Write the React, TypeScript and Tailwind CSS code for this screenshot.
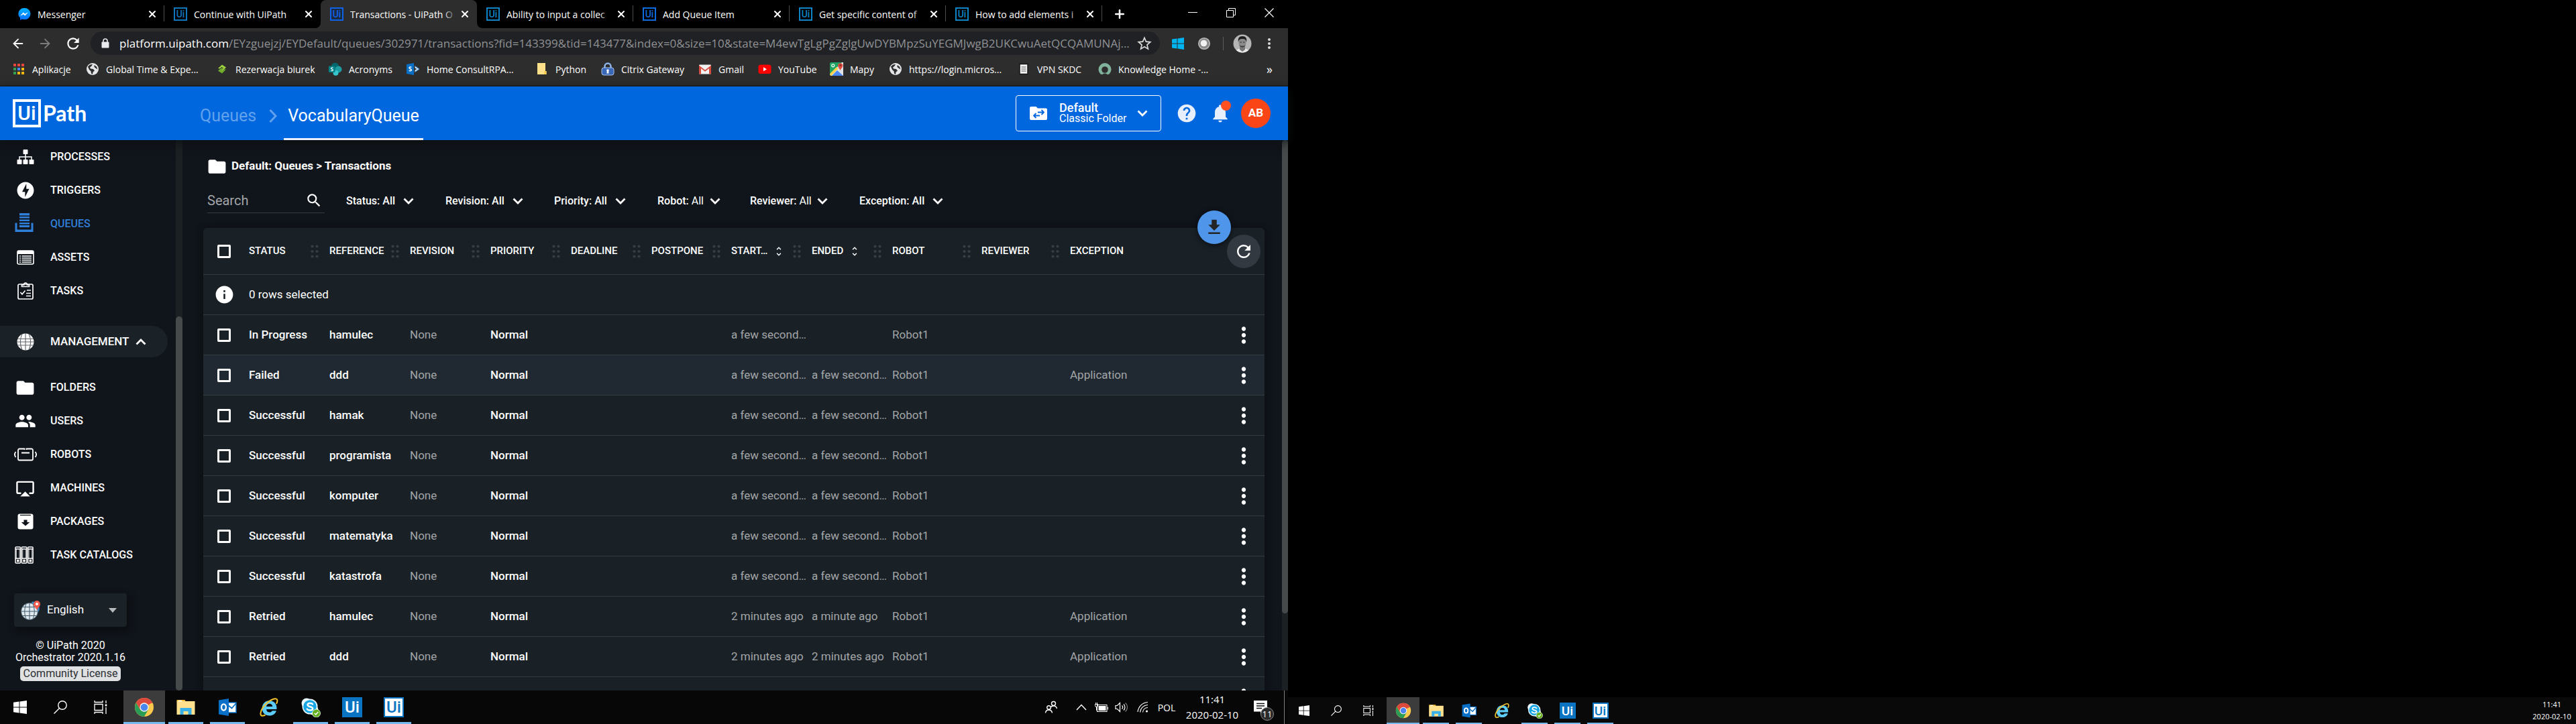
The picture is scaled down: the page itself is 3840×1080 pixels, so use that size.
import type { ReactNode } from "react";
import {
  MdAirplay,
  MdFileDownload,
  MdFolder,
  MdHelp,
  MdInfo,
  MdMoreVert,
  MdNotifications,
  MdOfflineBolt,
  MdPeople,
  MdRefresh,
  MdSearch,
  MdStarBorder,
  MdUnfoldMore,
} from "react-icons/md";
import { ArrowLeft, ArrowRight, Plus, X } from "lucide-react";

/* ---------- small shared marks ---------- */

function UiFavicon({ className }: { className: string }) {
  return (
    <span className={`flex size-5 shrink-0 items-center justify-center border-2 font-['Roboto',sans-serif] text-[14px] leading-none font-medium ${className}`}>
      Ui
    </span>
  );
}

function Chevron({ className }: { className: string }) {
  return (
    <svg viewBox="0 0 16 10" className={`h-2.5 w-4 shrink-0 ${className}`} fill="none" stroke="currentColor" strokeWidth="2.800">
      <path d="M1.500 1.500L8 8l6.500-6.500" />
    </svg>
  );
}

function MessengerIcon() {
  return (
    <svg viewBox="0 0 20 20" className="size-5 shrink-0">
      <defs>
        <linearGradient id="msg" x1="0" y1="0" x2="0" y2="1">
          <stop offset="0" stopColor="#00b2ff" />
          <stop offset="1" stopColor="#0a6cff" />
        </linearGradient>
      </defs>
      <path d="M10 1a8.6 8.6 0 0 0-8.700 8.600c0 2.500 1 4.500 2.700 6V19l2.700-1.500a10 10 0 0 0 3.300.6 8.600 8.600 0 1 0 0-17.100z" fill="url(#msg)" />
      <path d="M4.800 12l4-4.200 2.300 2.200L15.200 8l-4 4.200L9 10z" fill="#fff" stroke="#fff" strokeWidth=".6" strokeLinejoin="round" />
    </svg>
  );
}

function GlobeMark() {
  return (
    <svg viewBox="0 0 20 20" className="size-5">
      <circle cx="10" cy="10" r="9" fill="#e4e6e8" />
      <path d="M3 6.500C5 3.500 8 2.500 10 3L8.500 5.500 6 7.500l1 2 4 .5 2 2.500-2.500 2L10 18c-2-.5-2.500-3-2.300-4.500L5 11z" fill="#2d2d2d" />
      <path d="M12.500 4l3.500 2.500 1.500 4-2.500-1.500-2.500-2z" fill="#2d2d2d" />
    </svg>
  );
}

function AppsMark() {
  const colors = ["#e8453c", "#e8453c", "#e8453c", "#34a052", "#4286f5", "#f6b80c", "#34a052", "#f6b80c", "#f6b80c"];
  return (
    <svg viewBox="0 0 20 20" className="size-5">
      {colors.map((c, i) => (
        <rect key={i} x={2 + (i % 3) * 6} y={2 + Math.floor(i / 3) * 6} width="4" height="4" fill={c} />
      ))}
    </svg>
  );
}

const bookmarkIcons: Record<string, ReactNode> = {
  apps: <AppsMark />,
  globe: <GlobeMark />,
  green: (
    <svg viewBox="0 0 20 20" className="size-5">
      <path d="M4 9l6-5.500L16 7.500 10.500 13H8l4-4.500L9.500 7 6.500 9.500z" fill="#9bd13c" />
      <path d="M16 10.500L10 16.500l-6-4L9 8.500h3L8.500 12l2 1.300 3-2.800z" fill="#6fae2a" />
    </svg>
  ),
  sharepoint: (
    <svg viewBox="0 0 20 20" className="size-5">
      <circle cx="9.500" cy="6" r="5.500" fill="#03666c" />
      <circle cx="14.500" cy="10.500" r="5" fill="#1b9da2" />
      <circle cx="10.500" cy="15.800" r="4" fill="#36c5cf" />
      <rect x="0" y="5.500" width="9.500" height="9.500" rx="1" fill="#058388" />
      <path d="M6.500 8.300c-1.500-.7-3-.3-3 .7 0 1.400 3 1 3 2.500 0 1.200-1.800 1.400-3.200.7" stroke="#fff" strokeWidth="1.200" fill="none" />
    </svg>
  ),
  sharepointBlue: (
    <svg viewBox="0 0 20 20" className="size-5">
      <path d="M0 3l11-2v18L0 17z" fill="#0a6fc6" />
      <path d="M7.300 7.300C5.500 6.500 4 7 4 8.200c0 1.700 3.300 1.500 3.300 3.200 0 1.400-2 1.600-3.600.9" stroke="#fff" strokeWidth="1.500" fill="none" />
      <path d="M12.500 5.500v3l3 1.500-3 1.500v3L19 10z" fill="#cfe3f5" />
      <path d="M12.500 5.500L19 10l-6.500 4.500" stroke="#3d8fd8" strokeWidth="1" fill="none" />
    </svg>
  ),
  folder: (
    <svg viewBox="0 0 20 20" className="size-5">
      <path d="M3 1h12v12h1.500v5H3z" fill="#ffe08a" />
      <path d="M13 13h3.500v5H13z" fill="#f5cd55" />
    </svg>
  ),
  lock: (
    <svg viewBox="0 0 20 20" className="size-5">
      <path d="M5.500 9V6a4.500 4.500 0 0 1 9 0v3" stroke="#8fb4ea" strokeWidth="2.500" fill="none" />
      <rect x="1" y="8" width="18" height="11" rx="3" fill="#3a68b8" stroke="#a9c4ef" />
      <circle cx="10" cy="12" r="1.800" fill="#fff" />
      <path d="M9 12h2l.6 4.500H8.400z" fill="#fff" />
    </svg>
  ),
  gmail: (
    <svg viewBox="0 0 20 20" className="size-5">
      <rect x="1" y="3.500" width="18" height="14" rx="1" fill="#f2f2f2" />
      <path d="M1 17.500v-13l9 7 9-7v13h-3V9l-6 4.800L4 9v8.500z" fill="#d54b3d" />
    </svg>
  ),
  youtube: (
    <svg viewBox="0 0 20 20" className="size-5">
      <rect x="0.500" y="3.500" width="19" height="13.500" rx="3.500" fill="#f00" />
      <path d="M8 7.300l5 3-5 3z" fill="#fff" />
    </svg>
  ),
  maps: (
    <svg viewBox="0 0 20 20" className="size-5">
      <rect width="20" height="20" rx="2" fill="#1ea362" />
      <path d="M0 18L18 0h2v20H2z" fill="#dfe3e8" />
      <path d="M3 20l8-8 9 8z" fill="#4a89f3" />
      <path d="M0 17L10 7l2.500 2.500L2 20H1z" fill="#fdd44b" />
      <path d="M15.500 12c-.5-2-3.500-4.500-3.500-7a3.700 3.700 0 0 1 7.400 0c0 2.500-3.400 5-3.900 7z" fill="#dd4b3e" />
      <circle cx="15.700" cy="4.500" r="1.400" fill="#822f2b" />
      <circle cx="4.800" cy="4.800" r="2" fill="none" stroke="#fff" strokeWidth="1.200" />
    </svg>
  ),
  page: (
    <svg viewBox="0 0 20 20" className="size-5">
      <rect x="4" y="2.500" width="12" height="15" fill="#f3f3f3" stroke="#161616" strokeWidth="1.500" />
      <path d="M6.500 7h7M6.500 10h7M6.500 13h7" stroke="#555" strokeWidth="1.200" />
    </svg>
  ),
  ring: (
    <svg viewBox="0 0 20 20" className="size-5">
      <path d="M3.500 17.500a9.500 9.500 0 1 1 13 0l-2.500.8-1.800-1.300a6 6 0 0 0-4.400 0L6 18.300z" fill="#7fb39c" />
      <circle cx="10" cy="11" r="4.800" fill="#2d2d2d" />
    </svg>
  ),
};

/* ---------- browser chrome ---------- */

const tabs = [
  { title: "Messenger", icon: "messenger", active: false, line: true },
  { title: "Continue with UiPath", icon: "border-[#1177bb] text-[#1177bb]", active: false, line: false },
  { title: "Transactions - UiPath O", icon: "border-[#0f62e6] text-[#0f62e6] bg-[#1c2a40]", active: true, line: false },
  { title: "Ability to input a collec", icon: "border-[#0d85c4] text-[#0d85c4]", active: false, line: true },
  { title: "Add Queue Item", icon: "border-[#0f6cdf] text-[#0f6cdf]", active: false, line: true },
  { title: "Get specific content of", icon: "border-[#0d85c4] text-[#0d85c4]", active: false, line: true },
  { title: "How to add elements i", icon: "border-[#0d85c4] text-[#0d85c4]", active: false, line: true },
];

function TabFlare({ side }: { side: "left" | "right" }) {
  return (
    <svg viewBox="0 0 8 8" className={side === "left" ? "absolute bottom-0 -left-2 size-2" : "absolute -right-2 bottom-0 size-2 -scale-x-100"}>
      <path d="M8 0v8H0a8 8 0 0 0 8-8z" fill="#2d2d2d" />
    </svg>
  );
}

function TabStrip() {
  return (
    <div className="flex h-[42px] items-stretch bg-black pl-3 text-[14px] text-white">
      {tabs.map((tab) => (
        <div
          key={tab.title}
          className={`relative flex max-w-[233px] flex-1 items-center pr-2.5 pl-3.5 ${tab.active ? "rounded-t-lg bg-[#2d2d2d]" : ""}`}
        >
          {tab.active && <TabFlare side="left" />}
          {tab.active && <TabFlare side="right" />}
          {tab.icon === "messenger" ? <MessengerIcon /> : <UiFavicon className={tab.icon} />}
          <span className="relative ml-2.5 min-w-0 flex-1 overflow-hidden whitespace-nowrap">
            {tab.title}
            <span
              className={`absolute inset-y-0 right-0 w-5 bg-linear-to-r from-transparent ${tab.active ? "to-[#2d2d2d]" : "to-black"}`}
            />
          </span>
          <button aria-label={`Close ${tab.title}`} className="ml-1 flex size-4 items-center justify-center">
            <X className="size-4" strokeWidth={3} />
          </button>
          {tab.line && <span className="absolute top-2 right-0 h-6 w-px bg-[#4d4d4d]" />}
        </div>
      ))}
      <button aria-label="New tab" className="ml-4 flex items-center justify-center">
        <Plus className="size-5" strokeWidth={3} />
      </button>
      <div className="ml-auto flex items-center pb-1">
        <button aria-label="Minimize" className="flex w-[57px] items-center justify-center">
          <svg viewBox="0 0 14 14" className="size-[14px]"><path d="M0 6.500h14" stroke="#fff" /></svg>
        </button>
        <button aria-label="Restore" className="flex w-[57px] items-center justify-center">
          <svg viewBox="0 0 14 14" className="size-[14px]" fill="none" stroke="#fff"><path d="M.5 3.500h10v10H.500zM3.500 3.500v-3h10v10h-3" /></svg>
        </button>
        <button aria-label="Close window" className="flex w-[57px] items-center justify-center">
          <svg viewBox="0 0 14 14" className="size-[14px]" stroke="#fff" strokeWidth="1.200"><path d="M.5.5l13 13M13.500.500l-13 13" /></svg>
        </button>
      </div>
    </div>
  );
}

const query =
  "/EYzguejzj/EYDefault/queues/302971/transactions?fid=143399&tid=143477&index=0&size=10&state=M4ewTgLgPgZglgUwDYBMpzSuYEGMJwgB2UKCwuAetQCQAMUNAj...";

function AddressBar() {
  return (
    <div className="flex h-[45px] items-center bg-[#2d2d2d] pr-3.5 pl-4">
      <button aria-label="Back" className="flex w-10 items-center text-white"><ArrowLeft className="size-[22px]" /></button>
      <button aria-label="Forward" className="flex w-10 items-center text-[#7d7d7d]"><ArrowRight className="size-[22px]" /></button>
      <button aria-label="Reload" className="flex w-[39px] items-center text-white"><MdRefresh className="size-[26px]" /></button>
      <div className="flex h-[35px] min-w-0 flex-1 items-center rounded-full bg-[#202124] pr-2.5 pl-4">
        <svg viewBox="0 0 12 16" className="mr-[15px] h-4 w-3 shrink-0">
          <rect x=".5" y="5.500" width="11" height="9" rx="1" fill="#e8eaed" />
          <path d="M3 6V4a3 3 0 0 1 6 0v2" fill="none" stroke="#e8eaed" strokeWidth="1.600" />
        </svg>
        <p className="min-w-0 flex-1 overflow-hidden text-[17px] whitespace-nowrap text-[#8f9194]">
          <span className="text-white">platform.uipath.com</span>
          {query}
        </p>
        <button aria-label="Bookmark this page" className="text-[#d8d8d8]"><MdStarBorder className="size-[26px]" /></button>
      </div>
      <div className="flex items-center">
        <svg viewBox="0 0 20 20" className="ml-[17px] size-5" fill="#00b4f0">
          <path d="M1 3.500l7.500-1v7H1zM9.500 2.400L19 1v8.500H9.500zM1 10.500h7.500v7l-7.500-1zM9.500 10.500H19V19l-9.500-1.400z" />
        </svg>
        <svg viewBox="0 0 20 20" className="ml-[19px] size-5">
          <circle cx="10" cy="10" r="8.300" fill="#8a8a8a" stroke="#b9b9b9" strokeWidth="1.500" />
          <circle cx="9.500" cy="9.500" r="4.800" fill="#f2f2f2" />
        </svg>
        <span className="ml-[18px] h-5 w-px bg-[#5c5c5c]" />
        <svg viewBox="0 0 28 28" className="ml-[14px] size-7" role="img" aria-label="Profile">
          <defs><clipPath id="avatar"><circle cx="14" cy="14" r="13.500" /></clipPath></defs>
          <g clipPath="url(#avatar)">
            <rect width="28" height="28" fill="#b5b5b5" />
            <path d="M3 28c1-5 5-7 11-7s10 2 11 7z" fill="#e8e8e8" />
            <path d="M10 17h8v6l-4 3-4-3z" fill="#777" />
            <ellipse cx="14" cy="13" rx="5.500" ry="7.500" fill="#8b8b8b" />
            <path d="M8 12c-1-6 1-9 6-9s7 3 6 9c-1-4-2-5-6-5s-5 1-6 5z" fill="#1d1d1d" />
            <path d="M9.500 16c1 5 8 5 9 0-1 1.500-2 1.500-4.500 1.500S10.500 17.500 9.500 16z" fill="#3c3c3c" />
            <path d="M10.500 12h2.500M15 12h2.500" stroke="#2a2a2a" />
          </g>
        </svg>
        <button aria-label="Menu" className="ml-3 flex w-7 items-center justify-center text-[#d8d8d8]"><MdMoreVert className="size-6" /></button>
      </div>
    </div>
  );
}

const bookmarks = [
  { label: "Aplikacje", icon: "apps", width: "w-[80px]" },
  { label: "Global Time & Expe...", icon: "globe", width: "w-[163px]" },
  { label: "Rezerwacja biurek", icon: "green", width: "w-[139px]" },
  { label: "Acronyms", icon: "sharepoint", width: "w-[86px]" },
  { label: "Home ConsultRPA...", icon: "sharepointBlue", width: "w-[162px]" },
  { label: "Python", icon: "folder", width: "w-[68px]" },
  { label: "Citrix Gateway", icon: "lock", width: "w-[115px]" },
  { label: "Gmail", icon: "gmail", width: "w-[59px]" },
  { label: "YouTube", icon: "youtube", width: "w-[77px]" },
  { label: "Mapy", icon: "maps", width: "w-[58px]" },
  { label: "https://login.micros...", icon: "globe", width: "w-[161px]" },
  { label: "VPN SKDC", icon: "page", width: "w-[91px]" },
  { label: "Knowledge Home -...", icon: "ring", width: "w-[160px]" },
];

function BookmarkBar() {
  return (
    <nav aria-label="Bookmarks" className="flex h-[42px] items-center overflow-hidden border-b-2 border-[#222] bg-[#2d2d2d] pb-2 pl-[18px] text-[14px] text-white">
      {bookmarks.map((b) => (
        <a key={b.label} href="#" className="flex shrink-0 items-center gap-2.5">
          {bookmarkIcons[b.icon]}
          <span className={`whitespace-nowrap ${b.width}`}>{b.label}</span>
        </a>
      ))}
      <button aria-label="More bookmarks" className="mr-[23px] ml-auto text-[18px] leading-none">»</button>
    </nav>
  );
}

/* ---------- UiPath application ---------- */

function AppHeader() {
  return (
    <header className="relative z-10 flex h-20 items-center bg-[#0067df] pr-[26px] pl-[19px] text-white shadow-[0_4px_14px_rgba(12,16,16,0.9)]">
      <a href="#" aria-label="UiPath" className="flex w-[279px] items-center gap-[3px] text-[30px] leading-none font-bold">
        <span className="flex size-[42px] items-center justify-center border-4 border-white font-medium">Ui</span>
        <span className="font-['Lato',sans-serif] text-[32px]">Path</span>
      </a>
      <nav aria-label="Breadcrumb" className="flex h-full items-stretch text-[25px]">
        <a href="#" className="flex items-center pt-2 text-[#62a1eb]">Queues</a>
        <span className="flex items-center pt-2 pl-[9px] text-[#62a1eb]">
          <svg viewBox="0 0 12 20" className="mx-2.5 h-5 w-3" fill="none" stroke="currentColor" strokeWidth="3"><path d="M1.500 1l8.500 9-8.500 9" /></svg>
        </span>
        <span className="flex items-center border-b-[3px] border-[#e6effb] px-1.5 pt-[11px]">VocabularyQueue</span>
      </nav>
      <button className="ml-auto flex h-[54px] w-[217px] items-center rounded-[4px] border border-white pl-5 text-left">
        <svg viewBox="0 0 26 20" className="h-5 w-[26px]">
          <path d="M2 0h7.500l2.500 2.500H24a2 2 0 0 1 2 2V18a2 2 0 0 1-2 2H2a2 2 0 0 1-2-2V2a2 2 0 0 1 2-2z" fill="#fff" />
          <path d="M12 8.500h9M17.500 5l3.500 3.500L17.500 12M15 13.500H6M9.500 10L6 13.500 9.500 17" fill="none" stroke="#0067df" strokeWidth="1.800" />
        </svg>
        <span className="ml-[18px] flex flex-col text-[16px] leading-4">
          <strong className="text-[18px] leading-4 font-medium">Default</strong>
          <span>Classic Folder</span>
        </span>
        <Chevron className="ml-4" />
      </button>
      <button aria-label="Help" className="ml-[22px] text-[#e6effb]"><MdHelp className="size-8" /></button>
      <button aria-label="Notifications" className="relative ml-[18px] text-[#e6effb]">
        <MdNotifications className="size-8" />
        <span className="absolute -top-[3px] right-0 size-[15px] rounded-full bg-[#ff5022]" />
      </button>
      <button aria-label="Account AB" className="ml-[15px] flex size-11 items-center justify-center rounded-full bg-[#fa4616] text-[17px] font-bold">AB</button>
    </header>
  );
}

const navIcons: Record<string, ReactNode> = {
  PROCESSES: (
    <svg viewBox="0 0 26 24" className="h-6 w-[26px]" fill="currentColor">
      <rect x="9.500" y="1" width="7" height="7" rx="1" /><rect x="0.500" y="16" width="7" height="7" rx="1" /><rect x="9.500" y="16" width="7" height="7" rx="1" /><rect x="18.500" y="16" width="7" height="7" rx="1" />
      <path d="M13 8v8M4 16v-4h18v4" fill="none" stroke="currentColor" strokeWidth="1.500" />
    </svg>
  ),
  TRIGGERS: <MdOfflineBolt className="size-[30px]" />,
  QUEUES: (
    <svg viewBox="0 0 28 28" className="-mt-1 mr-1 size-7" fill="currentColor">
      <path d="M7 0h15v3.500H7zM7 5h15v2.500H7zM7 9.500h15V12H7zM7 14h15v2.500H7zM7 18h15v3H7z" />
      <path d="M.5 14.500h3v10h21v-10h3V28H.500z" />
    </svg>
  ),
  ASSETS: (
    <svg viewBox="0 0 26 22" className="h-[22px] w-[26px]">
      <path d="M3 1h20a2 2 0 0 1 2 2v16a2 2 0 0 1-2 2H3a2 2 0 0 1-2-2V3a2 2 0 0 1 2-2z" fill="none" stroke="currentColor" strokeWidth="1.600" />
      <path d="M1 1h24v5H1z" fill="currentColor" />
      <path d="M4 9h2M7.500 9H22M4 12h2M7.500 12H22M4 15h2M7.500 15H22M4 18h2M7.500 18H22" stroke="currentColor" strokeWidth="1.400" />
    </svg>
  ),
  TASKS: (
    <svg viewBox="0 0 24 26" className="h-[26px] w-6" fill="none" stroke="currentColor" strokeWidth="1.700">
      <rect x="1" y="3" width="22" height="22" rx="2" />
      <path d="M6.500 6.500V4h3c0-2 1-3 2.500-3s2.500 1 2.500 3h3v2.500z" />
      <path d="M4.500 15l2.500 3 4.500-5.500M14 12h6M13 16.500h7M13 20.500h7" />
    </svg>
  ),
  MANAGEMENT: (
    <svg viewBox="0 0 26 26" className="size-[26px]">
      <circle cx="13" cy="13" r="12.500" fill="currentColor" />
      <path d="M13 0v26M1 8.500h24M0 13h26M1 18h24M8 1c-3.500 7-3.500 17 0 24M18 1c3.500 7 3.500 17 0 24" fill="none" stroke="#5d6469" strokeWidth="1.100" />
    </svg>
  ),
  FOLDERS: <MdFolder className="size-[31px]" />,
  USERS: <MdPeople className="size-8" />,
  ROBOTS: (
    <svg viewBox="0 0 36 20" className="h-5 w-9" fill="none" stroke="currentColor" strokeWidth="1.800">
      <path d="M16.500 3V1.500H9a2 2 0 0 0-2 2v13a2 2 0 0 0 2 2h18a2 2 0 0 0 2-2v-13a2 2 0 0 0-2-2h-7.500V3" />
      <path d="M12 7.500h12M3.500 6c-2 2.500-2 5.500 0 8M32.500 6c2 2.500 2 5.500 0 8" />
    </svg>
  ),
  MACHINES: <MdAirplay className="size-[29px]" />,
  PACKAGES: (
    <svg viewBox="0 0 24 24" className="size-6">
      <rect x=".500" y=".500" width="23" height="23" rx="3" fill="currentColor" />
      <path d="M4 2.500h16" stroke="#10141b" strokeWidth="1.200" />
      <path d="M9.500 9.500h5v3.500h3.800L12 18.500 5.700 13h3.800z" fill="#10141b" />
    </svg>
  ),
  "TASK CATALOGS": (
    <svg viewBox="0 0 28 26" className="mr-1 h-[26px] w-7" fill="none" stroke="currentColor" strokeWidth="1.500">
      {[1, 10.300, 19.600].map((x) => (
        <g key={x}>
          <rect x={x} y="1" width="7.500" height="24" rx="1" />
          <path d={`M${x} 4h7.500M${x} 18h7.500`} />
          <path d={`M${x + 1.500} 4v14M${x + 6} 4v14`} strokeWidth=".7" />
          <rect x={x + 2.800} y="20.500" width="2" height="2" />
        </g>
      ))}
    </svg>
  ),
};

function NavItem({ label, active = false }: { label: string; active?: boolean }) {
  return (
    <li>
      <a href="#" className={`flex h-[50px] items-center text-[16px] font-medium ${active ? "text-[#2f7fd9]" : "text-white"}`}>
        <span className="flex w-[75px] shrink-0 items-center justify-center">{navIcons[label]}</span>
        {label}
      </a>
    </li>
  );
}

function Sidebar() {
  return (
    <aside className="flex w-[272px] shrink-0">
      <div className="flex min-w-0 flex-1 flex-col overflow-hidden">
        <ul>
          {["PROCESSES", "TRIGGERS", "QUEUES", "ASSETS", "TASKS"].map((l) => (
            <NavItem key={l} label={l} active={l === "QUEUES"} />
          ))}
        </ul>
        <button className="mt-[27px] flex h-[47px] w-[250px] shrink-0 items-center rounded-r-full bg-[#1a2127] text-[17px] font-medium text-white">
          <span className="flex w-[75px] items-center justify-center">{navIcons.MANAGEMENT}</span>
          MANAGEMENT
          <Chevron className="ml-2.5 rotate-180" />
        </button>
        <ul className="mt-5">
          {["FOLDERS", "USERS", "ROBOTS", "MACHINES", "PACKAGES", "TASK CATALOGS"].map((l) => (
            <NavItem key={l} label={l} />
          ))}
        </ul>
        <div className="flex w-[210px] flex-col items-center">
          <label className="relative mt-8 flex h-[50px] w-[168px] shrink-0 items-center rounded-[4px] bg-[#1a2127] shadow-[4px_5px_12px_rgba(10,13,12,0.8)]">
            <svg viewBox="0 0 30 30" className="ml-2.5 size-[30px] shrink-0">
              <path d="M16 3c9-3 15 9 10 15-2 3-5 2-6 0z" fill="#2f8fd0" />
              <circle cx="13" cy="17" r="12.500" fill="#dfe8ee" stroke="#3d5566" strokeWidth=".8" />
              <path d="M13 5v24M1 17h24M3 10.500h20M3 23.500h20M8 6c-3 7-3 16 0 22M18 6c3 7 3 16 0 22" fill="none" stroke="#3d5566" strokeWidth="1" />
              <path d="M24 15c-1-3-5-5-5-9a5 5 0 0 1 10 0c0 4-4 6-5 9z" fill="#f05a4e" />
              <circle cx="24" cy="6" r="2" fill="#fff" />
            </svg>
            <select aria-label="Language" defaultValue="English" className="h-full flex-1 appearance-none bg-transparent pl-[9px] text-[17px] text-white outline-none">
              <option>English</option>
            </select>
            <svg viewBox="0 0 12 7" className="pointer-events-none absolute right-[15px] h-[7px] w-3"><path d="M0 0h12L6 7z" fill="#b6babd" /></svg>
          </label>
          <p className="mt-[19px] text-[16px] leading-[18px] text-white">© UiPath 2020</p>
          <p className="text-[16px] leading-[18px] text-white">Orchestrator 2020.1.16</p>
          <p className="mt-1 rounded-[5px] bg-[#e0e1e2] px-[5px] text-[16px] leading-[22px] text-[#2c2f33]">Community License</p>
        </div>
      </div>
      <div className="flex w-2.5 flex-col bg-[#1b2023]">
        <div className="mt-[263px] flex-1 rounded-full bg-[#464a4b]" />
      </div>
    </aside>
  );
}

const filters = [
  { label: "Status:", width: "w-[148px]", light: false },
  { label: "Revision:", width: "w-[162px]", light: false },
  { label: "Priority:", width: "w-[154px]", light: false },
  { label: "Robot:", width: "w-[138px]", light: true },
  { label: "Reviewer:", width: "w-[163px]", light: true },
  { label: "Exception:", width: "w-[130px]", light: false },
];

function Toolbar() {
  return (
    <div className="mt-5 flex">
      <label className="ml-1.5 flex h-[37px] w-[175px] items-center border-b border-[#363a40]">
        <input aria-label="Search" placeholder="Search" className="min-w-0 flex-1 bg-transparent text-[20px] text-white outline-none placeholder:text-[#a3a5a8]" />
        <MdSearch className="mr-[3px] size-[26px] text-white" />
      </label>
      <div className="ml-8 flex items-center text-[16px] font-medium text-white">
        {filters.map((f) => (
          <label key={f.label} className={`flex items-center ${f.width}`}>
            <span className="mr-1">{f.label}</span>
            <select defaultValue="All" className={`appearance-none bg-transparent outline-none ${f.light ? "font-normal" : "font-medium"}`}>
              <option>All</option>
            </select>
            <Chevron className={f.light ? "ml-2" : "ml-3"} />
          </label>
        ))}
      </div>
    </div>
  );
}

const columns = [
  { name: "STATUS", width: "w-[120px]", sortable: false },
  { name: "REFERENCE", width: "w-[120px]", sortable: false },
  { name: "REVISION", width: "w-[120px]", sortable: false },
  { name: "PRIORITY", width: "w-[120px]", sortable: false },
  { name: "DEADLINE", width: "w-[120px]", sortable: false },
  { name: "POSTPONE", width: "w-[119px]", sortable: false },
  { name: "START…", width: "w-[120px]", sortable: true },
  { name: "ENDED", width: "w-[120px]", sortable: true },
  { name: "ROBOT", width: "w-[133px]", sortable: false },
  { name: "REVIEWER", width: "w-[132px]", sortable: false },
];

const few = "a few second…";
const rows = [
  { status: "In Progress", ref: "hamulec", start: few, end: "", exception: "" },
  { status: "Failed", ref: "ddd", start: few, end: few, exception: "Application" },
  { status: "Successful", ref: "hamak", start: few, end: few, exception: "" },
  { status: "Successful", ref: "programista", start: few, end: few, exception: "" },
  { status: "Successful", ref: "komputer", start: few, end: few, exception: "" },
  { status: "Successful", ref: "matematyka", start: few, end: few, exception: "" },
  { status: "Successful", ref: "katastrofa", start: few, end: few, exception: "" },
  { status: "Retried", ref: "hamulec", start: "2 minutes ago", end: "a minute ago", exception: "Application" },
  { status: "Retried", ref: "ddd", start: "2 minutes ago", end: "2 minutes ago", exception: "Application" },
];

const box = "block size-5 appearance-none rounded-[2px] border-[3px] border-white bg-transparent";

function Grip() {
  return (
    <svg viewBox="0 0 12 20" className="ml-auto h-5 w-3 shrink-0" fill="#373e44">
      {[2.500, 10, 17.500].map((y) => (
        <g key={y}><circle cx="2.500" cy={y} r="2.100" /><circle cx="9.500" cy={y} r="2.100" /></g>
      ))}
    </svg>
  );
}

function TransactionsTable() {
  return (
    <div className="relative mt-[22px] flex min-h-0 flex-1 flex-col">
      <div className="min-h-0 flex-1 overflow-hidden rounded-t-md bg-[#192026] shadow-[0_2px_12px_rgba(10,14,14,0.9)]">
        <table className="w-full table-fixed border-separate border-spacing-0 text-left text-[17px] text-white">
          <thead>
            <tr className="h-[70px] bg-[#192127] text-[15px] *:border-b *:border-[#343b41] *:font-medium">
              <th className="w-[68px] pl-[21px]"><input type="checkbox" aria-label="Select all rows" className={box} /></th>
              {columns.map((c) => (
                <th key={c.name} className={c.width}>
                  <span className="flex items-center pr-4">
                    {c.name}
                    {c.sortable && (
                      <button aria-label={`Sort by ${c.name}`} className="ml-2"><MdUnfoldMore className="size-[18px]" /></button>
                    )}
                    <Grip />
                  </span>
                </th>
              ))}
              <th>EXCEPTION</th>
              <th className="w-[62px]"><span className="sr-only">Actions</span></th>
            </tr>
          </thead>
          <tbody>
            <tr className="h-[60px] *:border-b *:border-[#343b41]">
              <td className="pl-4"><MdInfo className="size-[31px]" /></td>
              <td colSpan={12}>0 rows selected</td>
            </tr>
            {rows.map((r, i) => (
              <tr key={i} className={`h-[60px] *:border-b *:border-[#343b41] ${r.status === "Failed" ? "bg-[#202931]" : ""}`}>
                <td className="pl-[21px]"><input type="checkbox" aria-label={`Select ${r.ref}`} className={box} /></td>
                <td className="font-medium">{r.status}</td>
                <td className="font-medium">{r.ref}</td>
                <td className="text-[#a3a6a8]">None</td>
                <td className="font-medium">Normal</td>
                <td />
                <td />
                <td className="whitespace-nowrap text-[#a3a6a8]">{r.start}</td>
                <td className="whitespace-nowrap text-[#a3a6a8]">{r.end}</td>
                <td className="text-[#a3a6a8]">Robot1</td>
                <td />
                <td className="text-[#a3a6a8]">{r.exception}</td>
                <td>
                  <button aria-label={`Actions for ${r.ref}`} className="mx-auto flex items-center justify-center">
                    <MdMoreVert className="size-[38px]" />
                  </button>
                </td>
              </tr>
            ))}
            <tr className="h-[60px]">
              <td colSpan={12} />
              <td>
                <button aria-label="Actions" className="mx-auto flex items-center justify-center"><MdMoreVert className="size-[38px]" /></button>
              </td>
            </tr>
          </tbody>
        </table>
      </div>
      <button aria-label="Export" className="absolute -top-[26px] right-[50px] flex size-[50px] items-center justify-center rounded-full bg-[#4f95ea] text-[#242424] shadow-[0_2px_8px_rgba(0,0,0,0.6)]">
        <MdFileDownload className="size-[30px]" />
      </button>
      <button aria-label="Refresh" className="absolute top-2.5 right-1.5 flex size-[50px] items-center justify-center rounded-full bg-[#333940] text-white">
        <MdRefresh className="size-[30px]" />
      </button>
    </div>
  );
}

/* ---------- Windows taskbar ---------- */

const taskApps: { name: string; running: boolean; art: ReactNode }[] = [
  {
    name: "Chrome",
    running: true,
    art: (
      <svg viewBox="0 0 30 30" className="size-full">
        <circle cx="15" cy="15" r="14" fill="#fbc94b" />
        <path d="M15 15L2.900 8A14 14 0 0 1 27.100 8z" fill="#dc4a3d" />
        <path d="M2.900 8A14 14 0 0 0 15 29l6-10.500L15 15 8.900 18.500z" fill="#2a9c56" />
        <path d="M15 8.700h12.500A14 14 0 0 0 2.900 8l6 10.500z" fill="#dc4a3d" />
        <circle cx="15" cy="15" r="6.700" fill="#f4f4f4" />
        <circle cx="15" cy="15" r="5.300" fill="#4a86ee" />
      </svg>
    ),
  },
  {
    name: "File Explorer",
    running: true,
    art: (
      <svg viewBox="0 0 30 30" className="size-full">
        <path d="M1.500 4h12l1.500 3h-13.500z" fill="#f5bb2c" />
        <path d="M1.500 6h27v20h-27z" fill="#ffe08c" />
        <path d="M3.500 4.800h6v1.500h-6z" fill="#fff" />
        <path d="M6.500 16h17v10h-5v-5h-7v5h-5z" fill="#39b1e8" />
      </svg>
    ),
  },
  {
    name: "Outlook",
    running: true,
    art: (
      <svg viewBox="0 0 30 30" className="size-full">
        <rect x="14" y="8" width="14" height="15" fill="#fff" stroke="#0a6fc6" strokeWidth="1.500" />
        <path d="M16 12l5.500 4.500L28 9" fill="none" stroke="#0a6fc6" strokeWidth="1.800" />
        <path d="M2 4.500L17 2v26L2 25.500z" fill="#0a6fc6" />
        <ellipse cx="9.500" cy="15" rx="3.400" ry="4.600" fill="none" stroke="#fff" strokeWidth="2.300" />
      </svg>
    ),
  },
  {
    name: "Internet Explorer",
    running: false,
    art: (
      <svg viewBox="0 0 30 30" className="size-full">
        <path d="M26.500 18H11c.3 3 2.200 4.500 4.700 4.500 2 0 3.200-.8 4-2.300h6.300c-1.300 4.500-5.200 7.300-10.300 7.300C9 27.500 4.700 23 4.700 16.500S9.200 5.200 15.700 5.200c7 0 11.300 5 10.800 12.800zM11 14h9.300c-.2-2.700-2-4.300-4.600-4.300S11.400 11.300 11 14z" fill="#5ccbf7" />
        <path d="M26 10C29 4 27 .500 21 3 12 6.500 3 17 2.500 24c-.4 4.500 3 4.500 7 2.500" fill="none" stroke="#f2c32c" strokeWidth="2" />
      </svg>
    ),
  },
  {
    name: "Skype for Business",
    running: true,
    art: (
      <svg viewBox="0 0 30 30" className="size-full">
        <circle cx="9" cy="9" r="7.500" fill="#eaf7fd" />
        <circle cx="19" cy="19" r="7.500" fill="#eaf7fd" />
        <circle cx="14" cy="14" r="11.500" fill="#eaf7fd" />
        <circle cx="14" cy="14" r="9.800" fill="#16a6e6" />
        <path d="M18 10.500C17 8.500 10.500 8 10.500 11.500c0 3.500 7.700 2 7.700 5.500 0 3.300-7 3.200-8.500.5" fill="none" stroke="#fff" strokeWidth="2.400" strokeLinecap="round" />
        <circle cx="23.500" cy="24" r="6" fill="#62b01e" stroke="#fff" strokeWidth=".8" />
        <path d="M20.800 24l2 2 3.500-4" fill="none" stroke="#fff" strokeWidth="1.500" />
      </svg>
    ),
  },
  {
    name: "UiPath Robot",
    running: true,
    art: <span className="flex size-full items-center justify-center bg-[#0a74c2] text-white">Ui</span>,
  },
  {
    name: "UiPath Studio",
    running: true,
    art: <span className="flex size-full items-center justify-center border-2 border-[#0a74c2] bg-white text-[#0a74c2]">Ui</span>,
  },
];

function SystemButtons({ wide }: { wide: boolean }) {
  const cell = `flex items-center justify-center ${wide ? "w-[60px]" : "w-12"}`;
  const size = wide ? "size-5" : "size-4";
  return (
    <>
      <button aria-label="Start" className={cell}>
        <svg viewBox="0 0 20 20" className={size} fill="#fff"><path d="M0 2.800L8.500 1.600v8H0zM9.500 1.500L20 0v9.600H9.500zM0 10.500h8.500v8L0 17.300zM9.500 10.500H20V20L9.500 18.600z" /></svg>
      </button>
      <button aria-label="Search" className={cell}>
        <svg viewBox="0 0 20 20" className={size} fill="none" stroke="#fff" strokeWidth="1.400"><circle cx="13" cy="7" r="6.200" /><path d="M8.500 11.500L.5 19.500" /></svg>
      </button>
      <button aria-label="Task view" className={cell}>
        <svg viewBox="0 0 20 20" className={size} fill="none" stroke="#fff" strokeWidth="1.300"><path d="M1 5.500h12v9H1zM1 0v2.500h12V0M1 20v-2.500h12V20M18 0v4M18 10v10" /><path d="M16.700 5.500h2.600v3h-2.600z" fill="#fff" stroke="none" /></svg>
      </button>
    </>
  );
}

function TaskApps({ wide }: { wide: boolean }) {
  return (
    <div className={`flex items-stretch font-['Roboto',sans-serif] leading-none font-medium ${wide ? "ml-1 text-[24px]" : "ml-[3px] text-[19px]"}`}>
      {taskApps.map((app, i) => (
        <button key={app.name} aria-label={app.name} className={`relative flex items-center justify-center ${wide ? "w-[62px]" : "w-[49px]"} ${i === 0 ? "bg-[#3c3c3c]" : ""}`}>
          <span className={wide ? "size-[30px]" : "size-6"}>{app.art}</span>
          {app.running && (
            <span className={`absolute bottom-0 bg-[#76b9ed] ${wide ? "h-[3px]" : "h-0.5"} ${i === 0 ? "inset-x-0" : "inset-x-[5px]"}`} />
          )}
        </button>
      ))}
    </div>
  );
}

function Tray() {
  return (
    <div className="ml-auto flex items-stretch text-[14px] text-white">
      <button aria-label="People" className="mr-2 flex w-11 items-center justify-center">
        <svg viewBox="0 0 20 20" className="size-5" fill="none" stroke="#fff" strokeWidth="1.400"><circle cx="13.500" cy="4.500" r="3" /><circle cx="6.500" cy="10.500" r="2.800" /><path d="M9.500 10c1.500-3 8-3 9 2M1.500 18.500c.5-6 9-6 10 0" /></svg>
      </button>
      <button aria-label="Show hidden icons" className="flex w-[30px] items-center justify-center">
        <svg viewBox="0 0 16 10" className="h-2.5 w-4" fill="none" stroke="#fff" strokeWidth="1.400"><path d="M1 9l7-7.500L15 9" /></svg>
      </button>
      <button aria-label="Battery" className="flex w-[30px] items-center justify-center">
        <svg viewBox="0 0 20 16" className="h-4 w-5" fill="none" stroke="#fff"><rect x="3.500" y="4.500" width="14.500" height="10" /><rect x="6" y="6.500" width="10" height="6" fill="#fff" /><path d="M19.500 7.500v4M.5 3.500h4v2a2 2 0 0 1-4 0zM1.500 1v2.500M3.500 1v2.500M2.500 7.500v5h1" /></svg>
      </button>
      <button aria-label="Volume" className="flex w-[30px] items-center justify-center">
        <svg viewBox="0 0 20 16" className="h-4 w-5" fill="none" stroke="#fff" strokeWidth="1.200"><path d="M1 5.500h2.500L7.500 1.500v13L3.500 10.500H1zM10.500 5.500c1.500 1.500 1.500 3.500 0 5M13 3.500c2.500 2.500 2.500 6.500 0 9" /><path d="M15.500 1.500c4 3.500 4 9.500 0 13" stroke="#777" /></svg>
      </button>
      <button aria-label="Network" className="flex w-[33px] items-center justify-center">
        <svg viewBox="0 0 18 18" className="size-[18px]" fill="none" stroke="#fff" strokeWidth="1.200"><path d="M1 16C2 8 8 2 16 1.500M4.500 16.500C5 10.500 9.500 6 16 5.500M8.500 16.500c.5-4 3.500-7 7.500-7" /><circle cx="14.500" cy="15" r="1.600" fill="#fff" stroke="none" /></svg>
      </button>
      <button className="flex w-[38px] items-center justify-center">POL</button>
      <div className="flex w-[98px] flex-col items-center justify-center text-[15px] leading-[23px]">
        <span>11:41</span>
        <span>2020-02-10</span>
      </div>
      <button aria-label="11 notifications" className="relative flex w-[46px] items-center justify-center">
        <svg viewBox="0 0 20 20" className="size-5"><path d="M0 0h20v16.500h-6L10 20v-3.500H0z" fill="#fff" /><path d="M4 4.500h12M4 8h12M4 11.500h8" stroke="#111" strokeWidth="1.300" /></svg>
        <span className="absolute right-[3px] bottom-[5px] flex size-5 items-center justify-center rounded-full border border-[#8a8a8a] bg-[#2a2a2a] text-[13px] leading-none">11</span>
      </button>
      <span className="mr-[5px] ml-3 w-px bg-[#808080]" />
    </div>
  );
}

/* ---------- page ---------- */

export default function App() {
  return (
    <div className="flex h-screen overflow-hidden bg-black font-['Open_Sans',sans-serif]">
      <section className="flex w-1/2 flex-col">
        <TabStrip />
        <AddressBar />
        <BookmarkBar />
        <div className="flex min-h-0 flex-1 flex-col bg-[#10141b] font-['Roboto',sans-serif]">
          <AppHeader />
          <div className="flex min-h-0 flex-1">
            <Sidebar />
            <main className="flex min-w-0 flex-1 flex-col overflow-hidden pr-[26px] pl-[31px]">
              <h1 className="mt-[26px] flex h-[26px] items-center gap-1.5 pl-[5px] text-[17px] font-bold text-white">
                <MdFolder className="size-[31px]" />
                Default: Queues &gt; Transactions
              </h1>
              <Toolbar />
              <TransactionsTable />
            </main>
            <div className="w-[9px] bg-[#1b2023]">
              <div className="h-[86%] rounded-full bg-[#464a4b]" />
            </div>
          </div>
        </div>
        <footer className="flex h-[50px] shrink-0 items-stretch bg-[#070707]">
          <SystemButtons wide />
          <TaskApps wide />
          <Tray />
        </footer>
      </section>
      <section className="flex w-1/2 flex-col justify-end">
        <footer className="flex h-10 items-stretch bg-[#090909]">
          <SystemButtons wide={false} />
          <TaskApps wide={false} />
          <div className="mr-1.5 ml-auto flex w-[60px] flex-col items-center justify-center text-[11px] leading-[18px] text-white">
            <span>11:41</span>
            <span>2020-02-10</span>
          </div>
        </footer>
      </section>
    </div>
  );
}
